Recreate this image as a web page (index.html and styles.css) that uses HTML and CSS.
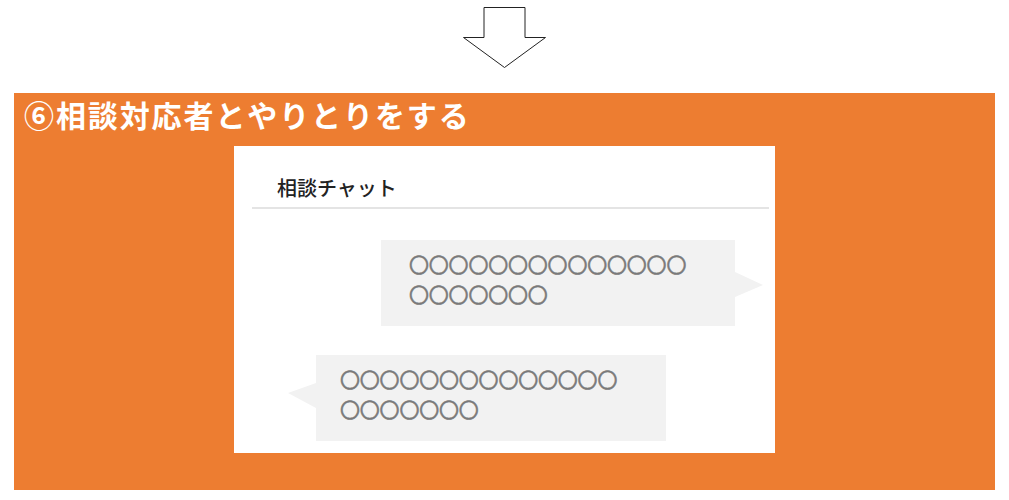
FILE: index.html
```html
<!DOCTYPE html>
<html lang="ja">
<head>
    <meta charset="UTF-8">
    <title>相談対応者とやりとりをする</title>
    <link rel="stylesheet" href="styles.css">
</head>
<body>
    <div class="arrow">
        <svg width="84" height="62" viewBox="0 0 84 62">
            <polygon points="21,0.5 62,0.5 62,30.5 82.5,30.5 41.5,60.5 0.5,30.5 21,30.5" fill="#fff" stroke="#222" stroke-width="1"/>
        </svg>
    </div>

    <section class="step">
        <h2 class="step-title">⑥相談対応者とやりとりをする</h2>

        <div class="card">
            <h3 class="chat-title">相談チャット</h3>
            <div class="thread">
                <div class="bubble bubble-right">〇〇〇〇〇〇〇〇〇〇〇〇〇〇<br>〇〇〇〇〇〇〇</div>
                <div class="bubble bubble-left">〇〇〇〇〇〇〇〇〇〇〇〇〇〇<br>〇〇〇〇〇〇〇</div>
            </div>
        </div>
    </section>
</body>
</html>
```

FILE: styles.css
```css
body {
    margin: 0;
    background: #ffffff;
    font-family: "Noto Sans CJK JP", "Noto Sans", sans-serif;
}

.arrow {
    display: flex;
    justify-content: center;
    padding-top: 7px;
    height: 93px;
    box-sizing: border-box;
}

.arrow svg {
    display: block;
}

.step {
    background: #ed7d31;
    margin: 0 14px;
    height: 397px;
    padding: 2px 0 0 10px;
    box-sizing: border-box;
}

.step-title {
    margin: 0;
    color: #ffffff;
    font-size: 30px;
    font-weight: 700;
    line-height: 38px;
    letter-spacing: 1.9px;
}

.card {
    background: #ffffff;
    width: 541px;
    height: 307px;
    margin: 13px auto 0;
    position: relative;
    left: -5px;
    padding: 27px 6px 0 18px;
    box-sizing: border-box;
}

.chat-title {
    margin: 0;
    padding: 0 0 4px 25px;
    font-size: 20px;
    font-weight: 500;
    line-height: 30px;
    color: #222222;
    border-bottom: 2px solid #e4e4e4;
}

.thread {
    display: flex;
    flex-direction: column;
    gap: 29px;
    padding-top: 31px;
}

.bubble {
    position: relative;
    background: #f2f2f2;
    height: 86px;
    box-sizing: border-box;
    padding: 10px 0 0 28px;
    font-size: 20px;
    line-height: 30px;
    color: #7a7a7a;
    letter-spacing: -0.2px;
    -webkit-text-stroke: 0.5px #7a7a7a;
}

.bubble::after {
    content: "";
    position: absolute;
    width: 0;
    height: 0;
    border-top: 13px solid transparent;
    border-bottom: 12px solid transparent;
}

.bubble-right {
    width: 354px;
    margin-left: 129px;
}

.bubble-right::after {
    right: -28px;
    top: 32px;
    border-left: 28px solid #f2f2f2;
}

.bubble-left {
    width: 350px;
    margin-left: 64px;
    padding-left: 24px;
}

.bubble-left::after {
    left: -28px;
    top: 28px;
    border-top-width: 10px;
    border-bottom-width: 15px;
    border-right: 28px solid #f2f2f2;
}
```
